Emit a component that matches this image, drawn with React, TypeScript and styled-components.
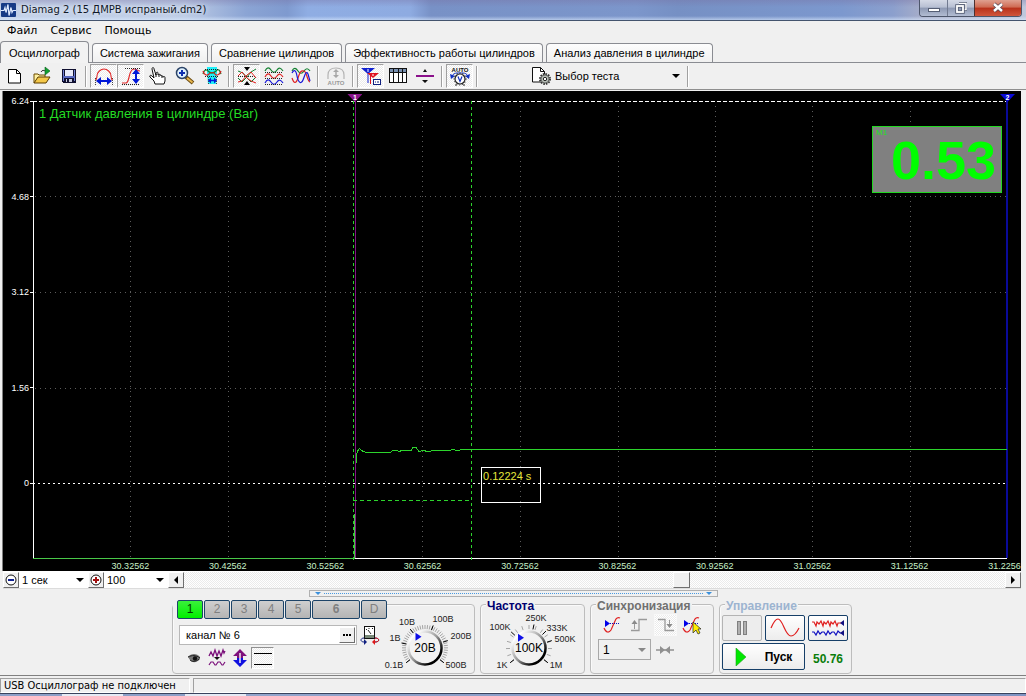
import React from 'react';
import styled, { createGlobalStyle, css } from 'styled-components';

const dither = css`
  background: repeating-conic-gradient(#ffffff 0 25%, #ebebeb 0 50%) 0 0 / 2px 2px;
`;

const GlobalStyle = createGlobalStyle`
  * { box-sizing: border-box; }
  body {
    margin: 0;
    background: #f0f0f0;
    font-family: "Liberation Sans", Arial, sans-serif;
    font-size: 11px;
    color: #000;
  }
  button, input, select { font: inherit; color: inherit; margin: 0; }
  svg { display: block; flex: none; }
`;

const Page = styled.div`
  display: flex;
  flex-direction: column;
  min-height: 100vh;
  background: #f0f0f0;
  overflow: hidden;
`;

/* ---------- title bar and menu ---------- */

const TitleBar = styled.header`
  display: flex;
  align-items: flex-start;
  height: 21px;
  padding-right: 4px;
  border-bottom: 1px solid #44546e;
  background:
    linear-gradient(to bottom, rgba(120, 110, 160, 0.35), rgba(255, 255, 255, 0) 35%, rgba(255, 255, 255, 0) 80%, rgba(220, 235, 255, 0.6)),
    linear-gradient(to right, #c3d1e8 0, #bccbe5 18%, #8ba4d4 24%, #7f9acf 28%, #8fade3 30%, #8eabe1 40%, #7891c6 42%, #7c96cb 62%, #7690c4 66%, #7c98ce 82%, #8b9fcd 87%, #a8aec9 90%, #c0c8dc 100%);
`;

const Logo = styled.span`
  margin: 3px 0 0 1px;
`;

const Title = styled.h1`
  flex: 1;
  margin: 0 0 0 5px;
  font: 400 10px/20px "DejaVu Sans", sans-serif;
  color: #101828;
  text-shadow: 0 0 5px #fff;
`;

const WindowButtons = styled.div`
  display: flex;
  border: 1px solid #4d566b;
  border-top: 0;
  border-radius: 0 0 4px 4px;
  overflow: hidden;
`;

const WindowButton = styled.button<{ $close?: boolean }>`
  display: flex;
  align-items: center;
  justify-content: center;
  width: ${(p) => (p.$close ? 47 : 27)}px;
  height: 16px;
  padding: 0;
  border: 0;
  border-left: ${(p) => (p.$close ? '1px solid #4d3030' : '1px solid #717a90')};
  background: ${(p) =>
    p.$close
      ? 'linear-gradient(#dfa090, #cf6a52 45%, #b8311a 50%, #d0563c)'
      : 'linear-gradient(#d4d9e6, #b7bfd2 45%, #8d98b3 50%, #b2bcd2)'};
  &:first-child { border-left: 0; }
`;

const MenuBar = styled.nav`
  display: flex;
  gap: 13px;
  height: 20px;
  padding-left: 7px;
`;

const MenuItem = styled.button`
  padding: 0;
  border: 0;
  background: none;
  font: 400 11px/18px "DejaVu Sans", sans-serif;
`;

/* ---------- tabs ---------- */

const Tabs = styled.div`
  display: flex;
  align-items: flex-end;
  gap: 3px;
  height: 22px;
  border-bottom: 1px solid #8a8c92;
`;

const Tab = styled.button<{ $active?: boolean }>`
  height: ${(p) => (p.$active ? 22 : 19)}px;
  margin-bottom: ${(p) => (p.$active ? -1 : 0)}px;
  padding: 0 ${(p) => (p.$active ? 8 : 7)}px;
  border: 1px solid #8a8c92;
  border-bottom: 0;
  border-radius: 4px 4px 0 0;
  background: ${(p) => (p.$active ? '#f2f2f2' : 'linear-gradient(#fdfdfd, #f0f0f0)')};
  font-size: 11px;
  line-height: 16px;
  white-space: nowrap;
`;

/* ---------- tool bar ---------- */

const ToolBar = styled.div`
  display: flex;
  align-items: center;
  height: 27px;
  padding-left: 1px;
  border-bottom: 1px solid #8f8f8f;
`;

const Tool = styled.button<{ $pressed?: boolean }>`
  display: flex;
  align-items: center;
  justify-content: center;
  width: 27px;
  height: 24px;
  padding: 0;
  border: 1px solid transparent;
  background: none;
  ${(p) =>
    p.$pressed &&
    css`
      ${dither}
      border-color: #a0a0a0 #fff #fff #a0a0a0;
    `}
`;

const Separator = styled.span`
  width: 2px;
  height: 21px;
  margin: 0 3px;
  border-left: 1px solid #a0a0a0;
  border-right: 1px solid #fff;
`;

const TestPicker = styled.label`
  display: flex;
  align-items: center;
  gap: 3px;
  width: 153px;
  margin-left: 50px;
`;

const PlainSelect = styled.select`
  flex: 1;
  min-width: 0;
  height: 16px;
  padding: 0;
  border: 0;
  appearance: none;
  background: url("data:image/svg+xml,%3Csvg xmlns='http://www.w3.org/2000/svg' width='8' height='4'%3E%3Cpath d='M0 0h8L4 4z'/%3E%3C/svg%3E") no-repeat right 4px center;
  font-size: 11px;
`;

/* ---------- oscilloscope screen ---------- */

const Screen = styled.main`
  display: grid;
  grid-template-columns: 30px minmax(0, 1fr) 14px;
  grid-template-rows: 10px minmax(240px, 1fr) 13px;
  flex: 1;
  margin: 1px 5px 0 2px;
  border-left: 1px solid #808080;
  background: #000;
  overflow: hidden;
`;

const LevelAxis = styled.div`
  grid-area: 2 / 1;
  display: grid;
  grid-template-rows: repeat(4, 191fr) 150fr;
  justify-items: end;
  color: #fff;
  font-size: 9px;
  line-height: 12px;
`;

const Level = styled.span`
  display: flex;
  align-items: center;
  gap: 1px;
  height: 12px;
  margin-top: -6px;
  &::after { content: ''; width: 3px; height: 1px; background: #fff; }
`;

const TimeAxis = styled.div`
  grid-area: 3 / 2;
  display: grid;
  grid-template-columns: repeat(10, 1fr);
  margin: 0 -5% 0 5%;
  color: #c8f0c8;
  font-size: 9px;
  line-height: 16px;
  text-align: center;
`;

const PlotArea = styled.div`
  grid-area: 2 / 2;
  position: relative;
  & > svg { position: absolute; inset: 0; width: 100%; height: 100%; overflow: visible; }
`;

const TraceName = styled.p`
  position: relative;
  margin: 0;
  padding: 5px 0 0 6px;
  color: #24dc24;
  font-size: 13px;
  line-height: 16px;
`;

const Reading = styled.output`
  position: absolute;
  top: 25px;
  right: 5px;
  width: 130px;
  height: 67px;
  padding: 6px 5px 0 0;
  border: 1px solid #22d822;
  background: #808080;
  color: #00ff00;
  font-size: 54px;
  font-weight: 700;
  line-height: 54px;
  text-align: right;
`;

const ReadingName = styled.span`
  position: absolute;
  top: 1px;
  left: 3px;
  color: #22e022;
  font-size: 8px;
  font-weight: 400;
  line-height: 10px;
`;

const Interval = styled.div`
  position: absolute;
  top: 80%;
  left: 46%;
  width: 60px;
  height: 36px;
  padding-left: 1px;
  border: 1px solid #fff;
  color: #e6e63c;
  font-size: 11px;
  line-height: 16px;
`;

const Marker = styled.div<{ $at: number; $color: string }>`
  position: absolute;
  top: -7px;
  left: ${(p) => p.$at}%;
  width: 15px;
  height: 8px;
  margin-left: -7px;
  background: ${(p) => p.$color};
  clip-path: polygon(0 0, 100% 0, 50% 100%);
  color: #fff;
  font-size: 7px;
  font-weight: 700;
  line-height: 7px;
  text-align: center;
`;

/* ---------- time base row ---------- */

const TimeRow = styled.div`
  display: flex;
  height: 18px;
  margin: 0 5px 0 3px;
  padding: 1px 0;
  background: #fff;
  border-bottom: 1px solid #dcdcdc;
`;

const SquareButton = styled.button`
  display: flex;
  align-items: center;
  justify-content: center;
  width: 16px;
  height: 16px;
  padding: 0;
  border: 1px solid;
  border-color: #fff #6f6f6f #6f6f6f #fff;
  background: #f0f0f0;
`;

const StepSelect = styled(PlainSelect)<{ $width: number }>`
  flex: none;
  width: ${(p) => p.$width}px;
  padding-left: 3px;
  background-color: #fff;
`;

const Scroll = styled.input`
  flex: 1;
  min-width: 0;
  height: 16px;
  appearance: none;
  ${dither}
  &::-webkit-slider-thumb {
    appearance: none;
    width: 17px;
    height: 16px;
    border: 1px solid;
    border-color: #fff #6f6f6f #6f6f6f #fff;
    background: #f0f0f0;
  }
`;

/* ---------- control panels ---------- */

const Splitter = styled.button`
  display: flex;
  align-items: center;
  align-self: center;
  justify-content: space-between;
  width: 409px;
  height: 7px;
  margin: 1px 0 3px;
  padding: 0 5px;
  border: 1px solid #b0b0b0;
  background: #f0f0f0;
`;

const Dots = styled.span`
  flex: 1;
  margin: 0 3px;
  border-top: 1px dotted #4a9ae0;
`;

const Panels = styled.div`
  display: flex;
  justify-content: center;
  gap: 5px;
  height: 75px;
  padding: 4px 2px 1px 0;
`;

const Panel = styled.section<{ $width: number }>`
  display: flex;
  flex-direction: column;
  width: ${(p) => p.$width}px;
  border: 1px solid #bdbdbd;
  border-radius: 4px;
  box-shadow: inset 1px 1px 0 #fafafa;
`;

const PanelTitle = styled.h2<{ $color: string }>`
  align-self: flex-start;
  margin: -5px 0 0 5px;
  padding: 0 1px;
  background: #f0f0f0;
  color: ${(p) => p.$color};
  font: 700 12px/12px "Liberation Sans", Arial, sans-serif;
`;

const ChannelPanel = styled(Panel)`
  flex-direction: row;
`;

const ChannelColumn = styled.div`
  display: flex;
  flex-direction: column;
  width: 214px;
`;

const Channels = styled.div`
  display: flex;
  gap: 1px;
  width: 214px;
  margin-top: -5px;
  padding-left: 4px;
  background: #f0f0f0;
`;

const Channel = styled.button<{ $on?: boolean; $wide?: boolean }>`
  flex: ${(p) => (p.$wide ? '0 0 48px' : '0 0 26px')};
  height: 19px;
  padding: 0;
  border: 1px solid #1d4468;
  border-radius: 2px;
  background: ${(p) => (p.$on ? 'linear-gradient(#3af03a, #00f000)' : 'linear-gradient(#cfcfcf, #b4b4b4)')};
  color: ${(p) => (p.$on ? '#003800' : '#808080')};
  font-size: 12px;
  font-weight: ${(p) => (p.$wide ? 700 : 400)};
  line-height: 15px;
`;

const NameRow = styled.div`
  display: flex;
  align-items: center;
  gap: 3px;
  margin: 6px 0 0 6px;
`;

const NameBox = styled.div`
  display: flex;
  width: 178px;
  height: 20px;
  padding: 1px;
  border: 1px solid #b8b8b8;
  background: #fff;
`;

const NameInput = styled.input`
  flex: 1;
  min-width: 0;
  padding: 0 0 0 5px;
  border: 0;
  font-size: 11px;
`;

const ModeRow = styled.div`
  display: flex;
  align-items: center;
  margin: 2px 0 0 9px;
`;

const Mode = styled.button<{ $pressed?: boolean }>`
  display: flex;
  align-items: center;
  justify-content: center;
  width: 23px;
  height: 22px;
  padding: 0;
  border: 1px solid transparent;
  background: none;
  ${(p) =>
    p.$pressed &&
    css`
      ${dither}
      border-color: #909090 #fff #fff #909090;
    `}
`;

const SoftMode = styled(Mode)`
  ${dither}
  border-color: #f8f8f8;
`;

const DialDrawing = styled.svg`
  font: 9px "Liberation Sans", Arial, sans-serif;
  overflow: visible;
`;

const SyncIcons = styled.div`
  display: flex;
  justify-content: space-between;
  margin-top: 2px;
  padding: 0 9px 0 10px;
`;

const SyncLevel = styled.div`
  display: flex;
  align-items: center;
  gap: 5px;
  margin: 3px 0 0 7px;
`;

const SyncSelect = styled(PlainSelect)`
  flex: none;
  width: 53px;
  height: 21px;
  padding-left: 4px;
  border: 1px solid #a8a8a8;
  font-size: 12px;
  background-image: url("data:image/svg+xml,%3Csvg xmlns='http://www.w3.org/2000/svg' width='8' height='4'%3E%3Cpath fill='%23888' d='M0 0h8L4 4z'/%3E%3C/svg%3E");
`;

const RunGrid = styled.div`
  display: grid;
  grid-template-columns: repeat(3, 40px);
  grid-template-rows: 26px 27px;
  gap: 2px 3px;
  margin: 3px 0 0 2px;
`;

const RunButton = styled.button<{ $off?: boolean; $wide?: boolean }>`
  display: flex;
  align-items: center;
  justify-content: center;
  grid-column: span ${(p) => (p.$wide ? 2 : 1)};
  gap: 18px;
  padding: 0;
  border: 1px solid ${(p) => (p.$off ? '#b4b4b4' : '#163f68')};
  border-radius: 2px;
  background: ${(p) => (p.$off ? '#ededed' : 'linear-gradient(#ffffff, #ececec)')};
  font-size: 12px;
  font-weight: 700;
`;

const Rate = styled.output`
  align-self: center;
  padding-top: 4px;
  color: #0a7d0a;
  font-size: 12px;
  font-weight: 700;
  text-align: center;
`;

/* ---------- status bar ---------- */

const StatusBar = styled.footer`
  display: flex;
  gap: 3px;
  height: 18px;
  padding-top: 2px;
  border-top: 1px solid #808080;
`;

const StatusCell = styled.span<{ $width?: number }>`
  flex: ${(p) => (p.$width ? `0 0 ${p.$width}px` : '1')};
  padding-left: 3px;
  border: 1px solid;
  border-color: #a0a0a0 #fff #fff #a0a0a0;
  font: 400 11px/13px "DejaVu Sans Condensed", "DejaVu Sans", sans-serif;
  white-space: nowrap;
`;

const DesktopEdge = styled.div`
  height: 3px;
  border-top: 1px solid #39435e;
  background: linear-gradient(to right, #8da0c8 0 6%, #e6ebf5 6% 12%, #8da0c8 12% 18%, #e6ebf5 18% 24%, #93a5cc 24%, #7f93c2);
`;

/* ---------- icons ---------- */

type IconProps = { children: React.ReactNode; w?: number; h?: number; crisp?: boolean };

const Icon = ({ children, w = 20, h = 20, crisp }: IconProps) => (
  <svg width={w} height={h} viewBox={`0 0 ${w} ${h}`} fill="none" shapeRendering={crisp ? 'crispEdges' : undefined} aria-hidden="true">
    {children}
  </svg>
);

const LogoIcon = () => (
  <Icon w={15} h={14}>
    <rect width="15" height="14" rx="1" fill="#163a86" />
    <path d="M0 7.500h3l1-3 1 5 2-8 1 11 2-8 1 5 1-2h3" stroke="#dfeaff" strokeWidth="1.200" />
  </Icon>
);

const NewIcon = () => (
  <Icon>
    <path d="M3.500 3.500h8l4 4v9.500h-12z" fill="#fff" stroke="#000" />
    <path d="M11.500 3.500v4h4" stroke="#000" />
  </Icon>
);

const OpenIcon = () => (
  <Icon>
    <path d="M2 17V8h4l1 1h6v3" fill="#fff0a0" stroke="#6a4a00" />
    <path d="M2 17l4-6h12l-4 6z" fill="#f4c84a" stroke="#5a3c00" />
    <path d="M9 6c1-2 3-2 4-1" stroke="#333" />
    <path d="M13 1l5 4-5 4z" fill="#10a030" stroke="#075c18" strokeWidth=".6" />
  </Icon>
);

const SaveIcon = () => (
  <Icon crisp>
    <path d="M3 3h14v14H4l-1-1z" fill="#101030" />
    <path d="M4 4h1v11H4zM15 4h1v11h-1z" fill="#7080d0" />
    <path d="M6 4h8v6H6z" fill="#e8eaf8" />
    <path d="M4 10h12v2H4z" fill="#5868c0" />
    <path d="M7 13h6v3H7z" fill="#c8cce0" />
    <path d="M8 13h2v3H8z" fill="#101030" />
  </Icon>
);

const PeriodIcon = () => (
  <Icon>
    <path d="M1 14h1c0-1 1-2 1-4 0-4 4-7 7-7s7 3 7 7c0 2 1 3 1 4h1" stroke="#e02828" strokeWidth="1.100" />
    <path d="M1.500 12v7M18.500 12v7" stroke="#444" strokeDasharray="1 1" />
    <path d="M5 15h10" stroke="#0018d8" strokeWidth="2" />
    <path d="M2 15l5-4v8zM18 15l-5-4v8z" fill="#0018d8" />
  </Icon>
);

const AmplitudeIcon = () => (
  <Icon>
    <path d="M1 17h4c4 0 2-14 8-14 3 0 3 2 6 2" stroke="#e02828" strokeWidth="1.200" />
    <path d="M4 2.500h15M1 18.500h18" stroke="#222" strokeDasharray="1 1" />
    <path d="M15 6v9" stroke="#0018d8" strokeWidth="2" />
    <path d="M15 3l4 5h-8zM15 18l4-5h-8z" fill="#0018d8" />
  </Icon>
);

const HandIcon = () => (
  <Icon>
    <path d="M7 18l-1-3-4-4c-1-2 1-2 2-1l2 2-2-9c0-2 2-2 2 0l2 6V7c1-1 2-1 2 0v2c1-1 3-1 3 1 1-1 2 0 2 1 2-1 2 0 2 1v3l-1 3z" fill="#fff" stroke="#111" />
    <path d="M8 8v3M11 9v2M14 10v2" stroke="#111" />
  </Icon>
);

const MagnifierIcon = () => (
  <Icon>
    <path d="M11 11l7 6" stroke="#6a4a10" strokeWidth="4" />
    <path d="M12 12l5.500 4.500" stroke="#e8b850" strokeWidth="2" />
    <circle cx="7" cy="7" r="5.500" fill="#e0f2ff" stroke="#2c4468" strokeWidth="1.500" />
    <path d="M4 7h6M7 4v6" stroke="#1030b0" strokeWidth="2" />
  </Icon>
);

const SelectionIcon = () => (
  <Icon>
    <path d="M5 1h10v7l-1 10H6L5 8z" fill="#20f0f8" />
    <path d="M1 8c1-4 3-5 5-3s5 3 8 0 4 0 5 3" stroke="#108030" strokeWidth="1.200" />
    <path d="M1 5c1 4 4 5 6 3s5-2 6 0 5 1 6-3" stroke="#d02020" strokeWidth="1.200" />
    <path d="M3 3.500h14M3 10.500h14" stroke="#222" strokeDasharray="1 1" />
    <path d="M6.500 11v8M14.500 11v8" stroke="#444" strokeDasharray="1 1" />
    <path d="M8 14.500h5" stroke="#0018d8" strokeWidth="1.500" />
    <path d="M6 14.500l3-3v6zM15 14.500l-3-3v6z" fill="#0018d8" />
  </Icon>
);

const CenterWavesIcon = () => (
  <Icon>
    <path d="M1 10.500h18" stroke="#222" strokeDasharray="1 1" />
    <path d="M1 5l5 2 4 5 4 4 5-5" stroke="#128030" />
    <path d="M1 12l4 4 5-5 4-5 5-3" stroke="#128030" />
    <path d="M1 10l4-4 5 6 4 3 5 2" stroke="#e02020" />
    <path d="M1 16l4-1 5-6 4-3 5 6" stroke="#e02020" />
    <path d="M7 1h6l-3 4zM7 19h6l-3-4z" fill="#000" />
  </Icon>
);

const ThreeWavesIcon = () => (
  <Icon>
    <path d="M1 5c2-4 4-4 6-1s4 3 6 0 4-2 6 1" stroke="#128030" strokeWidth="1.200" />
    <path d="M1 11c2-4 4-4 6-1s4 3 6 0 4-2 6 1" stroke="#e02020" strokeWidth="1.200" />
    <path d="M1 17c2-4 4-4 6-1s4 3 6 0 4-2 6 1" stroke="#1818d8" strokeWidth="1.200" />
    <path d="M1 6.500h18M1 12.500h18M1 18.500h18" stroke="#222" strokeDasharray="1 1" />
  </Icon>
);

const OverlayWavesIcon = () => (
  <Icon>
    <path d="M1 5c2-4 4-3 6 0s4 3 6 0 4-3 6 0" stroke="#128030" strokeWidth="1.200" />
    <path d="M1 12c2 6 4 6 6 0s3-8 6-7 3 10 6 11" stroke="#e02020" strokeWidth="1.200" />
    <path d="M1 7c2-4 4-3 5 3s4 9 6 4 3-10 5-6l2 7" stroke="#1818d8" strokeWidth="1.200" />
  </Icon>
);

const AutoScaleIcon = () => (
  <Icon>
    <path d="M2 13V9c0-5 3-7 8-7s8 2 8 7v4" stroke="#b4b4b4" strokeWidth="1.200" />
    <path d="M10 4v7" stroke="#a8a8a8" strokeWidth="1.500" />
    <path d="M10 3l3 3H7zM10 12l3-3H7z" fill="#a8a8a8" />
    <text x="10" y="19" textAnchor="middle" fontSize="6" fontWeight="700" fill="#989898">AUTO</text>
  </Icon>
);

const MarkersIcon = () => (
  <Icon>
    <path d="M0 2h14l-7 6z" fill="#1020d0" />
    <path d="M7 8v9" stroke="#1020d0" />
    <path d="M6 7h12l-6 5z" fill="#e01020" />
    <path d="M9.500 9v9" stroke="#e01020" />
    <path d="M7 3v3M12 8v2" stroke="#fff" />
    <rect x="12.500" y="13.500" width="7" height="5" fill="#fff" stroke="#102080" />
    <path d="M14 16h1M16 16h2" stroke="#102080" />
  </Icon>
);

const TableIcon = () => (
  <Icon crisp>
    <rect x="1.500" y="2.500" width="17" height="14" fill="#fff" stroke="#111" />
    <path d="M2 3h16v3H2z" fill="#7890b0" />
    <path d="M1 6.500h18M5.500 3v14M10.500 3v14M14.500 3v14" stroke="#111" />
  </Icon>
);

const SplitIcon = () => (
  <Icon>
    <path d="M1 10h18" stroke="#8a108a" strokeWidth="2" />
    <path d="M8 6l2-3 2 3zM7 14h6l-3 3z" fill="#111" />
  </Icon>
);

const AutoVoltIcon = () => (
  <Icon>
    <text x="10" y="6" textAnchor="middle" fontSize="6" fontWeight="700" fill="#111">AUTO</text>
    <path d="M2 10c1-2 3-3 5-3h6c2 0 4 1 5 3" stroke="#1030c0" />
    <path d="M0 8l1 5 4-3zM20 8l-1 5-4-3z" fill="#1030c0" />
    <circle cx="10" cy="13" r="5" fill="#fff" stroke="#222" strokeWidth="1.200" />
    <circle cx="10" cy="13" r="6" stroke="#222" strokeDasharray="1 2" />
    <path d="M8 10.500l2 5 2-5" stroke="#1030c0" strokeWidth="1.200" />
    <path d="M5 19h2M13 19h2" stroke="#222" />
  </Icon>
);

const TestIcon = () => (
  <Icon w={21}>
    <path d="M1.500 1.500h8l4 4v10.500h-12z" fill="#fff" stroke="#111" />
    <path d="M9.500 1.500v4h4" stroke="#111" />
    <circle cx="14" cy="13" r="5" fill="#b8c0b8" stroke="#333" strokeWidth="2" strokeDasharray="1.500 1.100" />
    <circle cx="14" cy="13" r="4" fill="#b8c0b8" stroke="#555" strokeWidth=".8" />
    <circle cx="14" cy="13" r="1.700" fill="#fff" stroke="#222" />
  </Icon>
);

const StepIcon = ({ plus }: { plus?: boolean }) => (
  <Icon w={14} h={14}>
    <circle cx="7" cy="7" r="5" fill="#fff" stroke="#111" />
    <path d={plus ? 'M4 7h6M7 4v6' : 'M4 7h6'} stroke={plus ? '#a01010' : '#102090'} strokeWidth="2" />
  </Icon>
);

const ArrowIcon = ({ right }: { right?: boolean }) => (
  <Icon w={6} h={8}>
    <path d={right ? 'M1 0l4 4-4 4z' : 'M5 0L1 4l4 4z'} fill="#000" />
  </Icon>
);

const MeterIcon = () => (
  <Icon>
    <rect x="4.500" y="1.500" width="10" height="12" fill="#fff" stroke="#111" />
    <path d="M5 10h9v3H5z" fill="#778877" />
    <path d="M6 4l1 1M9 3v1M12 4l1-1M8 5l3 4" stroke="#222" />
    <path d="M4 13c-4 0-4 4 0 4M15 13c5 0 5 4 0 4" stroke="#102080" />
    <path d="M4 14l3 3-3 3z" fill="#102080" />
    <path d="M15 13c5 0 5 4 0 4" stroke="#e01818" />
    <path d="M15 14l-3 3 3 3z" fill="#e01818" />
  </Icon>
);

const EyeIcon = () => (
  <Icon w={14} h={10}>
    <path d="M1 4c3-4 9-4 12 0v2c-3 4-8 4-10 1z" fill="#777" />
    <path d="M1 4c4-2 8-2 12 1M3 7c2 2 6 2 9-1" stroke="#222" />
    <circle cx="8" cy="5.500" r="2.200" fill="#111" />
  </Icon>
);

const NoiseIcon = () => (
  <Icon w={18}>
    <path d="M1 8l2-4 2 4 2-6 2 6 2-5 2 5 2-6 1 3 1-2" stroke="#7a107a" strokeWidth="1.300" />
    <path d="M6 9h6l-3 3z" fill="#111" />
    <path d="M1 17l2-3h2l2 3h1l2-3h2l2 3h1l2-3" stroke="#7a107a" strokeWidth="1.200" />
  </Icon>
);

const ShiftIcon = () => (
  <Icon w={16} h={18}>
    <path d="M8 0l7 7h-4v2H5V7H1z" fill="#80107c" />
    <path d="M8 18l7-7h-4V9H5v2H1z" fill="#1010e0" />
    <path d="M8 4v10" stroke="#f0f0f0" strokeWidth="1.500" />
  </Icon>
);

const LinesIcon = () => (
  <Icon crisp>
    <path d="M1 5.500h18M1 16.500h18" stroke="#000" />
  </Icon>
);

const SyncCurveIcon = ({ cursor }: { cursor?: boolean }) => (
  <Icon>
    <path d="M1 13c2 5 5 5 7 2l4-9c1-3 3-4 5-3" stroke="#e02020" strokeWidth="1.200" />
    <path d="M5 8.500h12" stroke="#1010c0" strokeDasharray="1 1" />
    <path d="M2 5l5 3.500-5 3.500z" fill="#0000e8" />
    {cursor && <path d="M11 7l8 7h-3l2 4-2 1-2-4-3 3z" fill="#ffee00" stroke="#222" strokeWidth=".7" />}
  </Icon>
);

const EdgeIcon = ({ falling }: { falling?: boolean }) => (
  <Icon>
    {falling ? (
      <>
        <path d="M2 4.500h7v11h9" stroke="#9a9a9a" strokeWidth="1.300" />
        <path d="M13.500 5v7" stroke="#9a9a9a" />
        <path d="M10.500 9h6l-3 4z" fill="#8a8a8a" />
      </>
    ) : (
      <>
        <path d="M2 15.500h8v-11h8" stroke="#9a9a9a" strokeWidth="1.300" />
        <path d="M5.500 8v6" stroke="#9a9a9a" />
        <path d="M2.500 9h6l-3-4z" fill="#8a8a8a" />
      </>
    )}
  </Icon>
);

const MeetIcon = () => (
  <Icon w={18} h={10}>
    <path d="M0 5h18" stroke="#909090" strokeWidth="1.500" />
    <path d="M4 1l5 4-5 4zM14 1L9 5l5 4z" fill="#909090" />
  </Icon>
);

/* ---------- dials ---------- */

type DialLabel = { text: string; x: number; y: number };
type DialProps = { label: string; value: string; cx: number; cy: number; width: number; labels: DialLabel[]; marks: number[]; minor: number; pointer: number };

const polar = (cx: number, cy: number, r: number, deg: number) => {
  const a = (deg * Math.PI) / 180;
  return `${cx + r * Math.sin(a)} ${cy - r * Math.cos(a)}`;
};

const Dial = ({ label, value, cx, cy, width, labels, marks, minor, pointer }: DialProps) => {
  const ticks = Array.from({ length: minor + 1 }, (_, i) => -128 + (256 / minor) * i);
  const id = `knob-${label}`;
  return (
    <DialDrawing width={width} height={64} viewBox={`0 0 ${width} 64`} role="img" aria-label={`${label} ${value}`}>
      <defs>
        <linearGradient id={id} x1="0" y1="0" x2="1" y2="1">
          <stop offset="0.150" stopColor="#fff" />
          <stop offset="0.500" stopColor="#999" />
          <stop offset="0.800" stopColor="#000" />
        </linearGradient>
      </defs>
      {ticks.map((t) => (
        <path key={t} d={`M${polar(cx, cy, 19, t)}L${polar(cx, cy, 23, t)}`} stroke="#a4a4a4" />
      ))}
      {marks.map((t) => (
        <path key={t} d={`M${polar(cx, cy, 19, t)}L${polar(cx, cy, 24, t)}`} stroke="#000" />
      ))}
      <circle cx={cx} cy={cy} r="16.500" fill="#f2f2f2" stroke={`url(#${id})`} strokeWidth="2.500" />
      <path d="M-4 3L0-3L4 3z" fill="#1010e8" transform={`translate(${polar(cx, cy, 13, pointer).replace(' ', ',')}) rotate(90)`} />
      <text x={cx} y={cy + 4} textAnchor="middle" fontSize="12">{value}</text>
      {labels.map((l) => (
        <text key={l.text} x={l.x} y={l.y} textAnchor="middle" fill="#222">{l.text}</text>
      ))}
    </DialDrawing>
  );
};

const voltLabels: DialLabel[] = [
  { text: '0.1В', x: 7, y: 63 },
  { text: '1В', x: 8, y: 36 },
  { text: '10В', x: 20, y: 20 },
  { text: '100В', x: 56, y: 17 },
  { text: '200В', x: 74, y: 34 },
  { text: '500В', x: 69, y: 63 },
];

const rateLabels: DialLabel[] = [
  { text: '1K', x: 21, y: 56 },
  { text: '100K', x: 19, y: 18 },
  { text: '250K', x: 55, y: 9 },
  { text: '333K', x: 76, y: 19 },
  { text: '500K', x: 84, y: 30 },
  { text: '1M', x: 75, y: 56 },
];

/* ---------- plot ---------- */

const levels = ['6.24', '4.68', '3.12', '1.56', '0'];
const times = ['30.32562', '30.42562', '30.52562', '30.62562', '30.72562', '30.82562', '30.92562', '31.02562', '31.12562', '31.22562'];
const gridX = [97, 195, 292, 389, 487, 585, 682, 779, 877];
const gridY = [95, 191, 287];

const Plot = () => (
  <svg viewBox="0 0 974 457" preserveAspectRatio="none" fill="none" shapeRendering="crispEdges" aria-hidden="true">
    <g stroke="#5c5c5c" strokeDasharray="1 4">
      {gridX.map((x) => <path key={x} d={`M${x}.500 5V457`} />)}
      {gridY.map((y) => <path key={y} d={`M2 ${y}.500H974`} />)}
    </g>
    <path d="M.5 0V457" stroke="#fff" />
    <path d="M0 .5H974" stroke="#fff" strokeDasharray="4 2" />
    <path d="M0 382.500H974" stroke="#fff" strokeDasharray="2 3" />
    <path d="M0 457.500H974" stroke="#fff" />
    <path d="M322.500 0V457" stroke="#841484" />
    <path d="M974 0V457" stroke="#0a0a98" strokeWidth="2" />
    <g stroke="#2cd42c" strokeDasharray="3 3">
      <path d="M320.500 0V460M438.500 0V460" />
      <path d="M320 399.500H438" strokeDasharray="4 3" />
    </g>
    <path d="M0 457.500H321.500V413" stroke="#48c848" />
    <path
      d="M323.500 362V354L324.500 350L326.500 347.500L330 350.500L334 351.500H357L360 349.500H364L366 350.500L369 349.500H378L380 346.500H383L386 350.500L390 349.500L395 350.500L402 349.500H416L420 348.500L424 349.500L430 348.500H974"
      stroke="#2cd42c"
    />
  </svg>
);

const tabNames = ['Осциллограф', 'Система зажигания', 'Сравнение цилиндров', 'Эффективность работы цилиндров', 'Анализ давления в цилиндре'];

export default function App() {
  return (
    <Page>
      <GlobalStyle />
      <TitleBar>
        <Logo><LogoIcon /></Logo>
        <Title>Diamag 2 (15 ДМРВ испраный.dm2)</Title>
        <WindowButtons>
          <WindowButton aria-label="Свернуть">
            <Icon w={12} h={12}><rect x=".5" y="6.500" width="11" height="3" fill="#fff" stroke="#555e74" /></Icon>
          </WindowButton>
          <WindowButton aria-label="Развернуть">
            <Icon w={12} h={12}>
              <path d="M4 1.500h7v6H9" stroke="#555e74" strokeWidth="3" />
              <path d="M4 1.500h7v6H9" stroke="#fff" strokeWidth="1.500" />
              <rect x="2" y="4" width="6" height="6" stroke="#555e74" strokeWidth="3.500" />
              <rect x="2" y="4" width="6" height="6" stroke="#fff" strokeWidth="1.800" />
            </Icon>
          </WindowButton>
          <WindowButton $close aria-label="Закрыть">
            <Icon w={12} h={12}>
              <path d="M2 2l8 7M10 2L2 9" stroke="#5a4a55" strokeWidth="4" />
              <path d="M2 2l8 7M10 2L2 9" stroke="#fff" strokeWidth="2.400" />
            </Icon>
          </WindowButton>
        </WindowButtons>
      </TitleBar>

      <MenuBar>
        <MenuItem>Файл</MenuItem>
        <MenuItem>Сервис</MenuItem>
        <MenuItem>Помощь</MenuItem>
      </MenuBar>

      <Tabs role="tablist">
        {tabNames.map((name, i) => (
          <Tab key={name} role="tab" aria-selected={i === 0} $active={i === 0}>{name}</Tab>
        ))}
      </Tabs>

      <ToolBar role="toolbar">
        <Tool aria-label="Новый"><NewIcon /></Tool>
        <Tool aria-label="Открыть"><OpenIcon /></Tool>
        <Tool aria-label="Сохранить"><SaveIcon /></Tool>
        <Separator />
        <Tool $pressed aria-label="Период"><PeriodIcon /></Tool>
        <Tool $pressed aria-label="Амплитуда"><AmplitudeIcon /></Tool>
        <Tool aria-label="Перемещение"><HandIcon /></Tool>
        <Tool aria-label="Увеличить"><MagnifierIcon /></Tool>
        <Tool aria-label="Выделение"><SelectionIcon /></Tool>
        <Separator />
        <Tool $pressed aria-label="По центру"><CenterWavesIcon /></Tool>
        <Tool aria-label="Раздельно"><ThreeWavesIcon /></Tool>
        <Tool aria-label="Наложение"><OverlayWavesIcon /></Tool>
        <Separator />
        <Tool aria-label="Автомасштаб" disabled><AutoScaleIcon /></Tool>
        <Separator />
        <Tool $pressed aria-label="Маркеры"><MarkersIcon /></Tool>
        <Tool aria-label="Таблица"><TableIcon /></Tool>
        <Tool aria-label="Разделить"><SplitIcon /></Tool>
        <Separator />
        <Tool $pressed aria-label="Автовольтметр"><AutoVoltIcon /></Tool>
        <Separator />
        <TestPicker>
          <TestIcon />
          <PlainSelect aria-label="Выбор теста"><option>Выбор теста</option></PlainSelect>
        </TestPicker>
        <Separator />
      </ToolBar>

      <Screen>
        <LevelAxis>{levels.map((l) => <Level key={l}>{l}</Level>)}</LevelAxis>
        <PlotArea>
          <Plot />
          <TraceName>1 Датчик давления в цилиндре (Bar)</TraceName>
          <Marker $at={33} $color="#8a128a">1</Marker>
          <Marker $at={100} $color="#0a0ad8">2</Marker>
          <Reading><ReadingName>M1</ReadingName>0.53</Reading>
          <Interval>0.12224 s</Interval>
        </PlotArea>
        <TimeAxis>{times.map((t) => <span key={t}>{t}</span>)}</TimeAxis>
      </Screen>

      <TimeRow>
        <SquareButton aria-label="Уменьшить время"><StepIcon /></SquareButton>
        <StepSelect $width={69} aria-label="Время"><option>1 сек</option></StepSelect>
        <SquareButton aria-label="Увеличить масштаб"><StepIcon plus /></SquareButton>
        <StepSelect $width={64} aria-label="Масштаб"><option>100</option></StepSelect>
        <SquareButton aria-label="Назад"><ArrowIcon /></SquareButton>
        <Scroll type="range" min={0} max={1000} defaultValue={608} aria-label="Прокрутка" />
        <SquareButton aria-label="Вперёд"><ArrowIcon right /></SquareButton>
      </TimeRow>

      <Splitter aria-label="Скрыть панель">
        <Icon w={6} h={3}><path d="M0 0h6L3 3z" fill="#3a90dc" /></Icon>
        <Dots />
        <Icon w={6} h={3}><path d="M0 0h6L3 3z" fill="#3a90dc" /></Icon>
      </Splitter>

      <Panels>
        <ChannelPanel $width={303} aria-label="Канал">
          <ChannelColumn>
            <Channels>
              <Channel $on>1</Channel>
              <Channel>2</Channel>
              <Channel>3</Channel>
              <Channel>4</Channel>
              <Channel>5</Channel>
              <Channel $wide>6</Channel>
              <Channel>D</Channel>
            </Channels>
            <NameRow>
              <NameBox>
                <NameInput aria-label="Имя канала" defaultValue="канал № 6" />
                <SquareButton aria-label="Выбрать">
                  <Icon w={9} h={2} crisp><path d="M0 1h2M3 1h2M6 1h2" stroke="#000" strokeWidth="2" /></Icon>
                </SquareButton>
              </NameBox>
              <MeterIcon />
            </NameRow>
            <ModeRow>
              <Mode aria-label="Показать"><EyeIcon /></Mode>
              <Mode aria-label="Фильтр"><NoiseIcon /></Mode>
              <Mode aria-label="Сдвиг"><ShiftIcon /></Mode>
              <Mode $pressed aria-label="Линии"><LinesIcon /></Mode>
            </ModeRow>
          </ChannelColumn>
          <Dial
            label="Вольт" value="20В" cx={38} cy={43} width={86} labels={voltLabels}
            marks={[-128, -78, -38, 20, 72, 128]} minor={40} pointer={-30}
          />
        </ChannelPanel>

        <Panel $width={105} aria-label="Частота">
          <PanelTitle $color="#000070">Частота</PanelTitle>
          <Dial
            label="Частота" value="100K" cx={48} cy={36} width={103} pointer={-38}
            labels={rateLabels}
            marks={[-128, -48, 12, 45, 72, 128]} minor={14}
          />
        </Panel>

        <Panel $width={124} aria-label="Синхронизация">
          <PanelTitle $color="#707070">Синхронизация</PanelTitle>
          <SyncIcons>
            <Mode aria-label="По уровню"><SyncCurveIcon /></Mode>
            <Mode aria-label="По фронту" disabled><EdgeIcon /></Mode>
            <SoftMode aria-label="По спаду" disabled><EdgeIcon falling /></SoftMode>
            <Mode aria-label="Вручную"><SyncCurveIcon cursor /></Mode>
          </SyncIcons>
          <SyncLevel>
            <SyncSelect aria-label="Канал синхронизации"><option>1</option></SyncSelect>
            <MeetIcon />
          </SyncLevel>
        </Panel>

        <Panel $width={133} aria-label="Управление">
          <PanelTitle $color="#9db4d0">Управление</PanelTitle>
          <RunGrid>
            <RunButton $off aria-label="Пауза" disabled>
              <Icon w={12} h={16} crisp><path d="M1.500 1.500h3v13h-3zM7.500 1.500h3v13h-3z" fill="#b0b0b0" stroke="#808080" /></Icon>
            </RunButton>
            <RunButton aria-label="Один кадр">
              <Icon w={30}><path d="M1 10C4 3 6 1 8 1c5 0 7 17 13 17 3 0 6-4 8-8" stroke="#e02020" strokeWidth="1.200" /></Icon>
            </RunButton>
            <RunButton aria-label="Поток">
              <Icon w={34}>
                <path d="M1 4h2l2 4 1-4 2 2 2-3 2 5 1-4 2 2 2-3 2 5 1-4 2 2 2-3 2 5 1-3h3" stroke="#e02020" strokeWidth="1.200" />
                <path d="M1 14h2l2 3 2-4 2 3 2-2h2l2 3 2-4 2 3 2-2h2l2 3 2-4 2 2h2" stroke="#1010c0" strokeWidth="1.200" />
                <path d="M33 2v6l-4-3zM33 12v6l-4-3z" fill="#101080" />
              </Icon>
            </RunButton>
            <RunButton $wide>
              <Icon w={12} h={18}><path d="M1 0l10 9-10 9z" fill="#00e800" stroke="#20a020" strokeWidth=".6" /></Icon>
              Пуск
            </RunButton>
            <Rate>50.76</Rate>
          </RunGrid>
        </Panel>
      </Panels>

      <StatusBar>
        <StatusCell $width={190}>USB Осциллограф не подключен</StatusCell>
        <StatusCell />
      </StatusBar>
      <DesktopEdge />
    </Page>
  );
}
